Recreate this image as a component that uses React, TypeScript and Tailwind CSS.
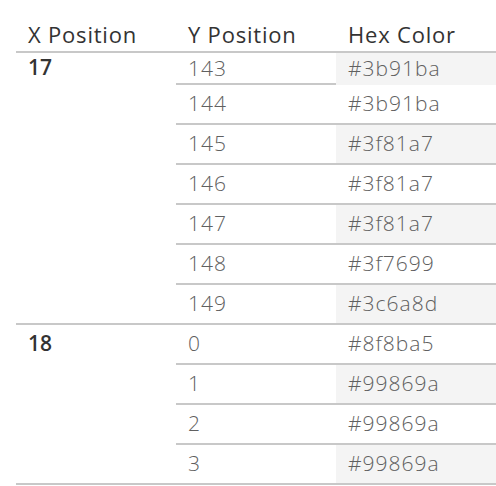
import React from 'react'

interface Row {
  y: number
  hex: string
}

interface Group {
  x: number
  rows: Row[]
}

const groups: Group[] = [
  {
    x: 17,
    rows: [
      { y: 143, hex: '#3b91ba' },
      { y: 144, hex: '#3b91ba' },
      { y: 145, hex: '#3f81a7' },
      { y: 146, hex: '#3f81a7' },
      { y: 147, hex: '#3f81a7' },
      { y: 148, hex: '#3f7699' },
      { y: 149, hex: '#3c6a8d' },
    ],
  },
  {
    x: 18,
    rows: [
      { y: 0, hex: '#8f8ba5' },
      { y: 1, hex: '#99869a' },
      { y: 2, hex: '#99869a' },
      { y: 3, hex: '#99869a' },
    ],
  },
]

// banding in the hex column runs across groups
const offsets = groups.map((_, gi) => groups.slice(0, gi).reduce((n, g) => n + g.rows.length, 0))

export default function App() {
  return (
    <div className="w-[496px] h-[486px] overflow-hidden bg-white pl-4 font-['Open_Sans',sans-serif]">
      <div className="grid grid-cols-[160px_160px_1fr] h-[53px] items-end border-b-2 border-[#c8c8c8] text-[22px] tracking-[0.8px] text-[#333333] font-medium">
        <div className="pl-3">X Position</div>
        <div className="pl-3">Y Position</div>
        <div className="pl-3">Hex Color</div>
      </div>
      {groups.map((group, gi) => (
        <div key={group.x} className="flex border-b-2 border-[#c8c8c8]">
          <div className={`w-[160px] pl-3 text-[21px] font-semibold text-[#333333] flex items-center ${gi === 0 ? 'h-[30px]' : 'h-[38px]'}`}>
            {group.x}
          </div>
          <div className="flex-1 flex flex-col">
            {group.rows.map((row, ri) => {
              const shaded = (offsets[gi] + ri) % 2 === 0
              const last = ri === group.rows.length - 1
              const first = gi === 0 && ri === 0
              const height = last ? 'h-[38px]' : first ? 'h-[32px] border-b-2 border-[#c8c8c8]' : 'h-[40px] border-b-2 border-[#c8c8c8]'
              return (
                <div
                  key={row.y}
                  className={`grid grid-cols-[160px_1fr] text-[21px] tracking-[1px] font-light text-[#606060] ${height}`}
                >
                  <div className="pl-3 flex items-center">{row.y}</div>
                  <div className={`pl-3 flex items-center ${shaded ? 'bg-[#f4f4f4]' : 'bg-white'}`}>{row.hex}</div>
                </div>
              )
            })}
          </div>
        </div>
      ))}
    </div>
  )
}
